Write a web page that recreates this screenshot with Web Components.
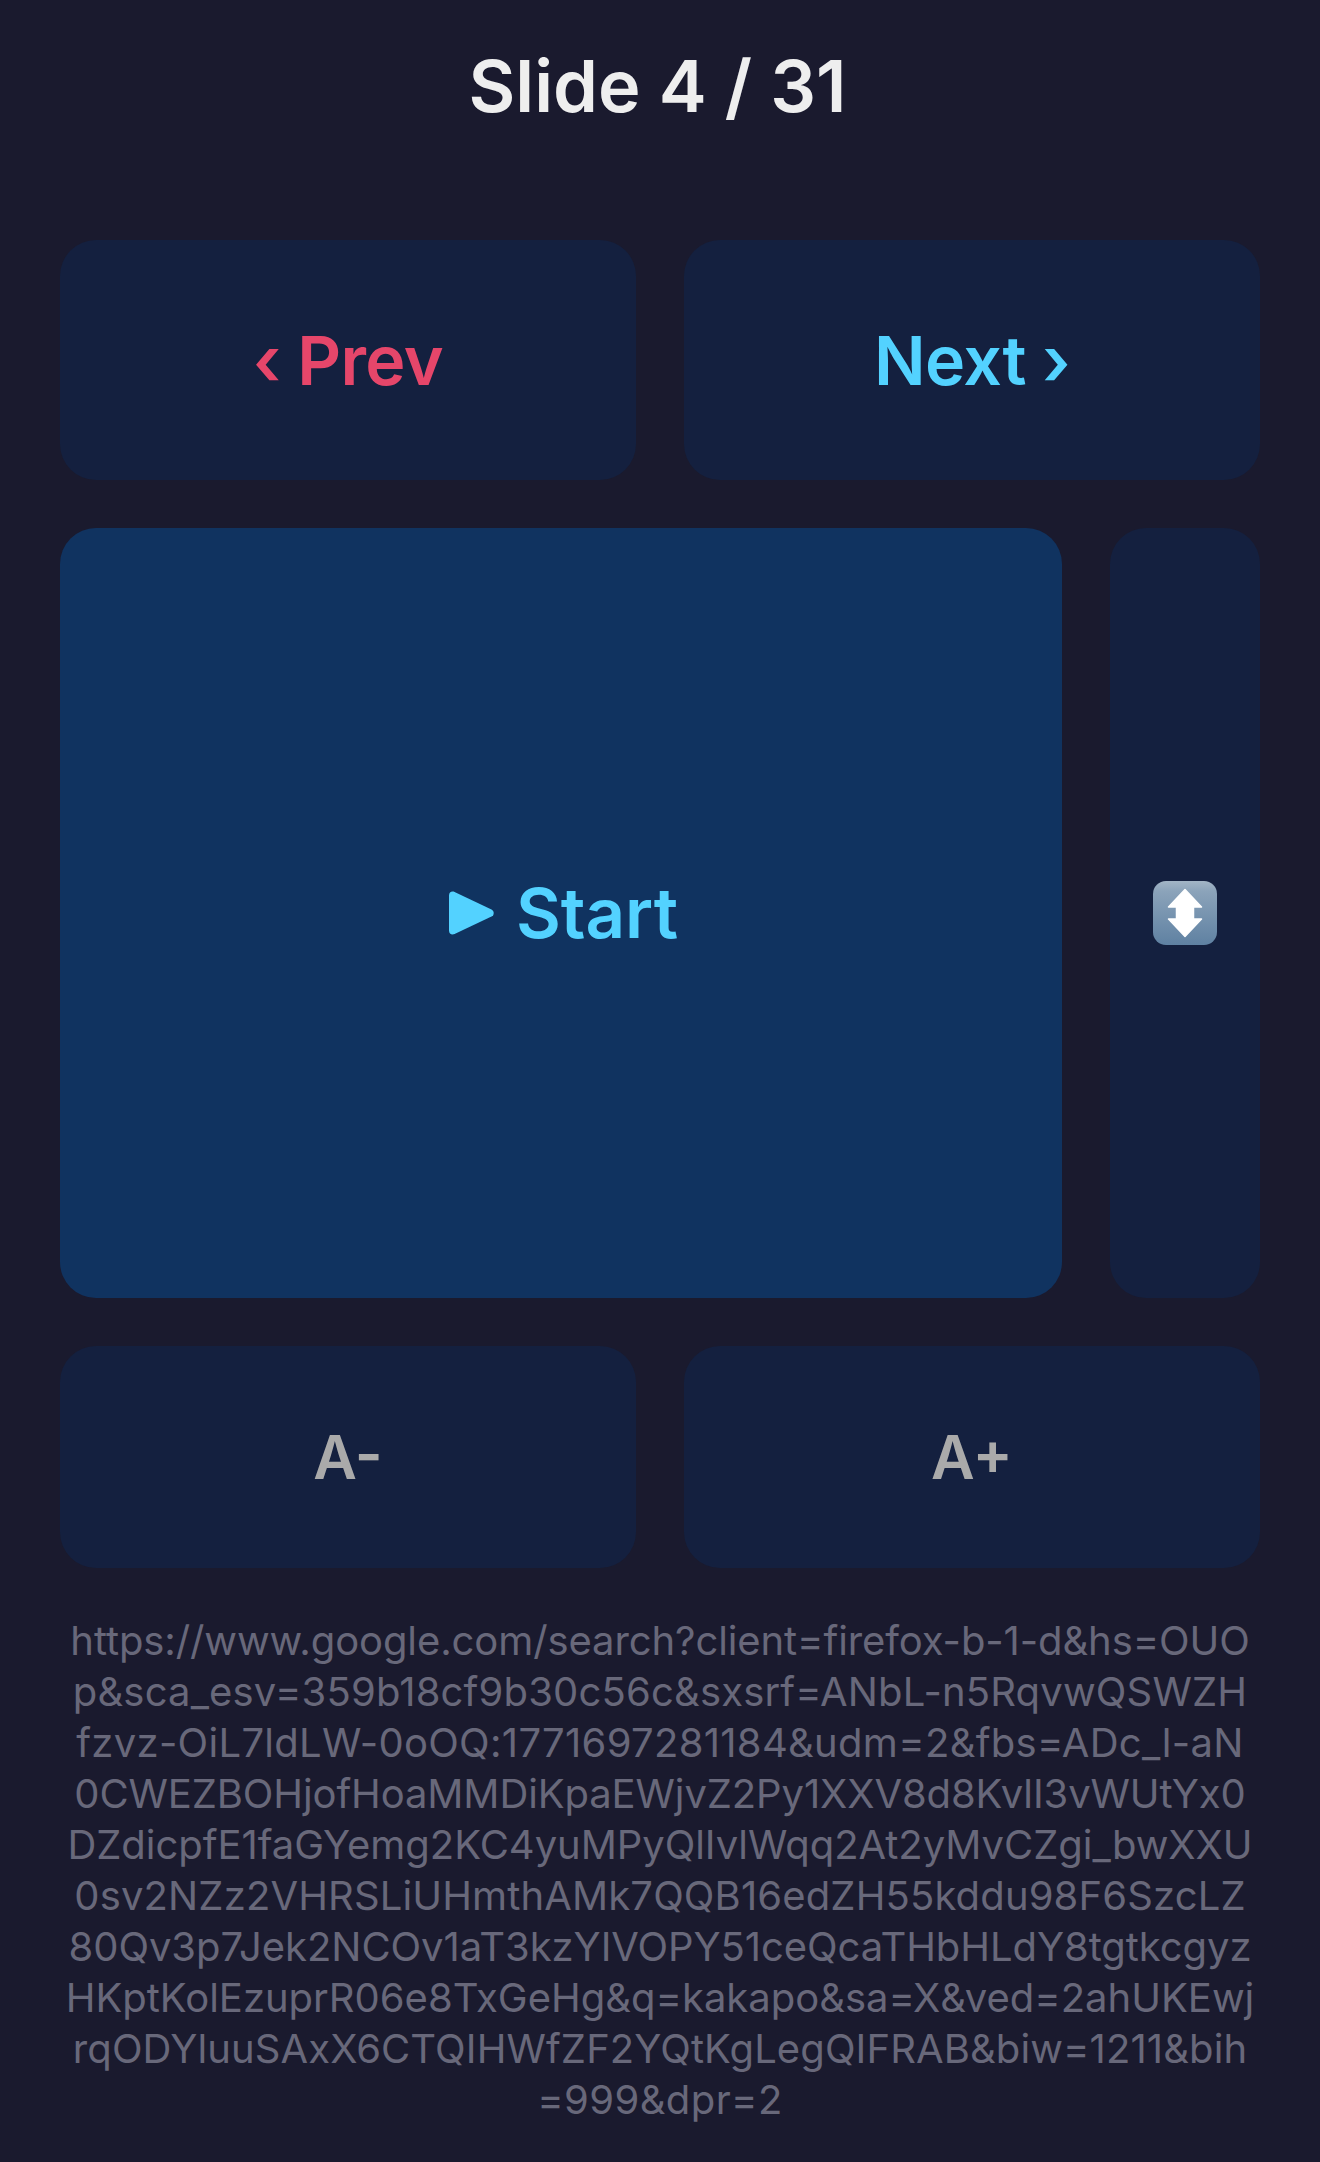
<!DOCTYPE html>
<html lang="en">
<head>
<meta charset="utf-8">
<title>Slide remote</title>
<style>
  html, body { margin: 0; background: #1a1a2e; font-family: Inter, "Liberation Sans", sans-serif; }
</style>
</head>
<body>
<slide-remote current="4" total="31">
  <remote-button slot="prev" tone="prev" size="nav">‹ Prev</remote-button>
  <remote-button slot="next" tone="next" size="nav">Next ›</remote-button>
  <remote-button slot="start" tone="start" size="start" filled>
    <svg slot="icon" width="48" height="46" viewBox="0 0 48 46" aria-hidden="true">
      <path d="M2 5.5C2 2.2 4.6.6 7.6 1.9L44.5 19.4c2.9 1.4 2.9 5.8 0 7.2L7.6 44.1C4.6 45.4 2 43.8 2 40.5Z" fill="currentColor"/>
    </svg>
    Start
  </remote-button>
  <remote-button slot="toggle" tone="plain">
    <svg width="66" height="66" viewBox="0 0 66 66" aria-hidden="true">
      <defs>
        <linearGradient id="key" x1="0" y1="0" x2="0" y2="1">
          <stop offset="0" stop-color="#a3b5c6"/>
          <stop offset=".16" stop-color="#8ba3ba"/>
          <stop offset="1" stop-color="#5f81a2"/>
        </linearGradient>
      </defs>
      <rect x="1" y="1" width="64" height="64" rx="13" fill="url(#key)"/>
      <path d="M33 9.5 49.5 27 H41.5 V39 H49.5 L33 56.5 16.5 39 H24.5 V27 H16.5 Z" fill="#fff" stroke="#fff" stroke-width="1.5" stroke-linejoin="round"/>
    </svg>
  </remote-button>
  <remote-button slot="smaller" tone="plain" size="font">A-</remote-button>
  <remote-button slot="larger" tone="plain" size="font">A+</remote-button>
  <url-note slot="url">
    <span style="letter-spacing:-.1px">https://www.google.com/search?client=firefox-b-1-d&amp;hs=OUO</span>
    <span style="letter-spacing:.17px">p&amp;sca_esv=359b18cf9b30c56c&amp;sxsrf=ANbL-n5RqvwQSWZH</span>
    <span style="letter-spacing:.3px">fzvz-OiL7ldLW-0oOQ:1771697281184&amp;udm=2&amp;fbs=ADc_l-aN</span>
    <span style="letter-spacing:-.11px">0CWEZBOHjofHoaMMDiKpaEWjvZ2Py1XXV8d8KvlI3vWUtYx0</span>
    <span style="letter-spacing:-.05px">DZdicpfE1faGYemg2KC4yuMPyQlIvlWqq2At2yMvCZgi_bwXXU</span>
    <span style="letter-spacing:.14px">0sv2NZz2VHRSLiUHmthAMk7QQB16edZH55kddu98F6SzcLZ</span>
    <span style="letter-spacing:-.07px">80Qv3p7Jek2NCOv1aT3kzYIVOPY51ceQcaTHbHLdY8tgtkcgyz</span>
    <span>HKptKolEzuprR06e8TxGeHg&amp;q=kakapo&amp;sa=X&amp;ved=2ahUKEwj</span>
    <span style="letter-spacing:.1px">rqODYluuSAxX6CTQIHWfZF2YQtKgLegQIFRAB&amp;biw=1211&amp;bih</span>
    <span style="letter-spacing:.4px">=999&amp;dpr=2</span>
  </url-note>
</slide-remote>

<script>
// Remote control layout: title, prev/next, start + toggle, font size, current url
class SlideRemote extends HTMLElement {
    constructor() {
        super();
        this.shadow = this.attachShadow({ mode: 'open' });
    }
    connectedCallback() {
        const current = this.getAttribute('current') || '1';
        const total = this.getAttribute('total') || '1';
        this.shadow.innerHTML = `
      <style>
        :host { display: block; box-sizing: border-box; width: 1320px; height: 2162px; padding: 0 60px; background: #1a1a2e; color: #eeeeee; }
        h1 { margin: 0; height: 240px; box-sizing: border-box; padding: 45px 5px 0 0; font-size: 72px; line-height: 82px; font-weight: 600; letter-spacing: 0; text-align: center; }
        .pair { display: grid; grid-template-columns: 1fr 1fr; gap: 48px; }
        .nav { height: 240px; }
        .stage { display: grid; grid-template-columns: 1fr 150px; gap: 48px; height: 770px; margin: 48px 0; }
        .font { height: 222px; }
        .url { margin-top: 47px; }
      </style>
      <h1>Slide ${current} / ${total}</h1>
      <div class="pair nav"><slot name="prev"></slot><slot name="next"></slot></div>
      <div class="stage"><slot name="start"></slot><slot name="toggle"></slot></div>
      <div class="pair font"><slot name="smaller"></slot><slot name="larger"></slot></div>
      <div class="url"><slot name="url"></slot></div>
    `;
    }
}
customElements.define('slide-remote', SlideRemote);

class RemoteButton extends HTMLElement {
    constructor() {
        super();
        this.shadow = this.attachShadow({ mode: 'open' });
    }
    connectedCallback() {
        this.shadow.innerHTML = `
      <style>
        :host { display: flex; align-items: center; justify-content: center; gap: 21px; height: 100%; border-radius: 36px; background: #14203f; color: #aaaaaa; font-weight: 600; font-size: 60px; line-height: 1; cursor: pointer; }
        :host([filled]) { background: #103360; }
        :host([tone="prev"]) { color: #e6466a; }
        :host([tone="next"]), :host([tone="start"]) { color: #53d2ff; }
        :host([size="nav"]) { font-size: 68px; letter-spacing: -0.6px; }
        :host([size="start"]) { font-size: 69px; padding-left: 3px; }
        ::slotted(svg) { flex: none; display: block; }
        span { display: flex; align-items: center; }
      </style>
      <slot name="icon"></slot><span><slot></slot></span>
    `;
    }
}
customElements.define('remote-button', RemoteButton);

class UrlNote extends HTMLElement {
    constructor() {
        super();
        this.shadow = this.attachShadow({ mode: 'open' });
    }
    connectedCallback() {
        this.shadow.innerHTML = `
      <style>
        :host { display: block; color: #68687a; font-size: 40px; line-height: 51px; text-align: center; white-space: nowrap; }
        ::slotted(span) { display: block; }
      </style>
      <slot></slot>
    `;
    }
}
customElements.define('url-note', UrlNote);
</script>
</body>
</html>
